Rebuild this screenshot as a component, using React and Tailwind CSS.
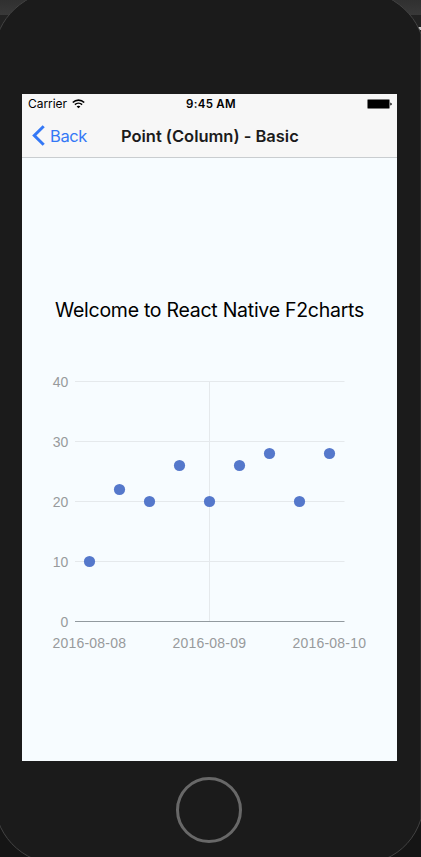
const DATES = [
  { x: 89.5, label: '2016-08-08' },
  { x: 209.5, label: '2016-08-09' },
  { x: 329.5, label: '2016-08-10' },
];
const TICKS = [40, 30, 20, 10, 0];
const VALUES = [10, 22, 20, 26, 20, 26, 28, 20, 28];

const chartX = (x) => x - 22;
const chartY = (value) => 261.5 - value * 6;

function DeviceFrame() {
  return (
    <svg className="absolute inset-0 h-[857px] w-[421px]" viewBox="0 0 421 857" aria-hidden="true">
      <defs>
        <linearGradient id="toolbar" x1="0" y1="0" x2="0" y2="1">
          <stop offset="0" stopColor="#303030" />
          <stop offset="1" stopColor="#393939" />
        </linearGradient>
      </defs>
      <rect width="421" height="857" fill="#151515" />
      <rect width="421" height="15" fill="url(#toolbar)" />
      <rect y="15" width="421" height="25" fill="#222222" />
      <rect x="417" y="27" width="4" height="3" fill="#c8c8c8" />
      <path
        d="M-2 34C3 20 14 6 32 -3H387C405 6 416 20 421 34V819C415 838 402 852 385 859H34C17 852 4 838 -2 821Z"
        fill="#1b1b1b"
        stroke="#434343"
        strokeWidth="1"
      />
    </svg>
  );
}

function StatusBar() {
  return (
    <div className="grid h-5 grid-cols-3 items-center pr-[5px] pl-[6px] text-[12px] leading-5 text-black">
      <div className="flex items-center gap-[5px]">
        <span className="tracking-[-0.05px]">Carrier</span>
        <svg className="h-[10px] w-[13px]" viewBox="0 0 13 10" fill="none" stroke="#000">
          <path d="M.8 3.5C4 .4 9 .4 12.2 3.5" strokeWidth="1.7" />
          <path d="M2.9 5.7C5 3.7 8 3.7 10.1 5.7" strokeWidth="1.6" />
          <path d="M6.5 9.3 4.6 7.4C5.7 6.4 7.3 6.4 8.4 7.4Z" fill="#000" stroke="none" />
        </svg>
      </div>
      <span className="pl-[2px] text-center text-[11.5px] font-semibold tracking-[0.3px] whitespace-nowrap">9:45 AM</span>
      <svg className="h-[10px] w-[25px] justify-self-end" viewBox="0 0 25 10">
        <rect x=".5" y=".5" width="22" height="9" rx="1" fill="#000" stroke="#777" />
        <path d="M23.3 3.5Q24.8 4 24.8 5T23.3 6.5Z" fill="#000" />
      </svg>
    </div>
  );
}

function NavBar() {
  return (
    <div className="flex h-11 items-center border-b border-[#c9cdd0] pl-[10px]">
      <svg className="h-[21px] w-[13px] shrink-0" viewBox="0 0 13 21" fill="none" stroke="#3478f6" strokeWidth="3">
        <path d="M11.7 1.2 2.3 10.5 11.7 19.8" />
      </svg>
      <span className="ml-[5px] w-[71px] shrink-0 pt-[2px] text-[16.5px] tracking-[-0.4px] text-[#3478f6]">Back</span>
      <h1 className="pt-[2px] text-[16.5px] font-semibold tracking-[-0.02px] whitespace-nowrap text-[#1b1b1b]">
        Point (Column) - Basic
      </h1>
    </div>
  );
}

function PointChart() {
  return (
    <svg className="h-[300px] w-[375px]" viewBox="0 0 375 300">
      <g stroke="#e5e9ec" strokeWidth="1">
        {TICKS.slice(0, 4).map((t) => (
          <line key={t} x1="53" x2="322.5" y1={chartY(t)} y2={chartY(t)} />
        ))}
        <line x1="187.5" x2="187.5" y1="21.5" y2="261" />
      </g>
      <line x1="53" x2="322.5" y1="261.5" y2="261.5" stroke="#929a9f" />
      <g fill="#979a9c" className="font-['Liberation_Sans',sans-serif] text-[14px]">
        {TICKS.map((t) => (
          <text key={t} x="46.3" y={chartY(t) + 5} textAnchor="end">
            {t}
          </text>
        ))}
        {DATES.map((d) => (
          <text key={d.label} x={chartX(d.x) - 0.3} y="287.5" textAnchor="middle" textLength="73.5">
            {d.label}
          </text>
        ))}
      </g>
      <g fill="#5578cb">
        {VALUES.map((v, i) => (
          <circle key={i} cx={67.5 + i * 30} cy={chartY(v)} r="5.6" />
        ))}
      </g>
    </svg>
  );
}

export default function App() {
  return (
    <div className="relative h-[857px] w-[421px] overflow-hidden font-['Inter',sans-serif]">
      <DeviceFrame />
      <div className="relative flex flex-col pt-[94px] pl-[22px]">
        <main className="flex h-[667px] w-[375px] flex-col bg-[#f7fcff]">
          <header className="bg-[#f7f7f7]">
            <StatusBar />
            <NavBar />
          </header>
          <h2 className="mt-[137px] h-[30px] text-center text-[19.5px] leading-[30px] tracking-[-0.27px] whitespace-nowrap text-black">
            Welcome to React Native F2charts
          </h2>
          <div className="mt-[35px]">
            <PointChart />
          </div>
        </main>
        <div className="mt-4 ml-[154px] size-[66px] rounded-full border-[3px] border-[#686868]" />
      </div>
    </div>
  );
}
